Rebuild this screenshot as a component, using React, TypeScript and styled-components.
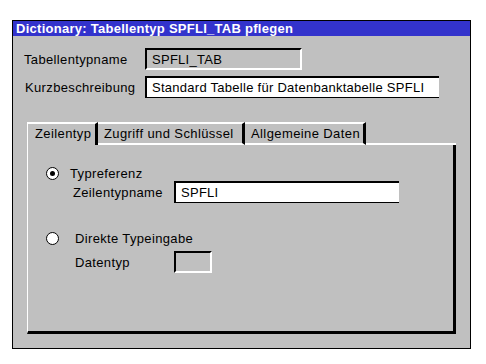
import React from 'react';
import styled, { createGlobalStyle } from 'styled-components';

const GlobalStyle = createGlobalStyle`
  html, body {
    margin: 0;
    padding: 0;
    background: #ffffff;
  }
  body {
    font-family: "Liberation Sans", Arial, sans-serif;
  }
`;

const Page = styled.div`
  padding: 20px 0 0 12px;
`;

const Window = styled.div`
  width: 459px;
  height: 329px;
  box-sizing: border-box;
  border: 1px solid #000;
  background: #c0c0c0;
  display: flex;
  flex-direction: column;
`;

const TitleBar = styled.div`
  height: 15px;
  background: #3333cc;
  color: #fff;
  font-weight: bold;
  font-size: 13px;
  letter-spacing: 0.27px;
  line-height: 15px;
  padding-left: 3px;
  white-space: nowrap;
  overflow: hidden;
`;

const Body = styled.div`
  flex: 1;
  display: flex;
  flex-direction: column;
  padding: 12px 14px 14px 11px;
`;

const FormGrid = styled.div`
  display: grid;
  grid-template-columns: 121px auto;
  row-gap: 6px;
  align-items: center;
`;

const Label = styled.span<{ $indent?: number }>`
  font-size: 13px;
  letter-spacing: 0.35px;
  color: #000;
  padding-left: ${(p) => p.$indent ?? 0}px;
  white-space: nowrap;
`;

const Field = styled.div<{ $width: number; $disabled?: boolean }>`
  width: ${(p) => p.$width}px;
  height: 22px;
  box-sizing: border-box;
  background: ${(p) => (p.$disabled ? '#c0c0c0' : '#ffffff')};
  border-top: 2px solid #000;
  border-left: 2px solid #000;
  border-bottom: ${(p) => (p.$disabled ? '2px solid #fff' : '1px solid #000')};
  border-right: ${(p) => (p.$disabled ? '2px solid #fff' : '0')};
  font-size: 13px;
  letter-spacing: 0.27px;
  line-height: 19px;
  padding-left: 5px;
  white-space: nowrap;
`;

const TabArea = styled.div`
  flex: 1;
  margin: 24px 0 0 3px;
  display: flex;
  flex-direction: column;
`;

const TabRow = styled.div`
  display: flex;
  height: 23px;
`;

const Tab = styled.div<{ $active?: boolean; $width: number }>`
  width: ${(p) => p.$width}px;
  box-sizing: border-box;
  border-top: 2px solid #fff;
  border-left: ${(p) => (p.$active ? '1px solid #fff' : '0')};
  border-right: 3px solid #000;
  border-bottom: ${(p) => (p.$active ? '0' : '2px solid #fff')};
  font-size: 13px;
  letter-spacing: 0.4px;
  line-height: 20px;
  padding-left: ${(p) => (p.$active ? 7 : 6)}px;
  white-space: nowrap;
`;

const TabRest = styled.div`
  flex: 1;
  border-bottom: 2px solid #fff;
`;

const TabPanel = styled.div`
  flex: 1;
  border-left: 1px solid #fff;
  border-right: 3px solid #000;
  border-bottom: 3px solid #000;
  padding: 20px 0 0 18px;
  display: flex;
  flex-direction: column;
`;

const OptionGroup = styled.div<{ $gap: number }>`
  display: flex;
  flex-direction: column;
  margin-bottom: ${(p) => p.$gap}px;
`;

const RadioLine = styled.div<{ $labelGap: number }>`
  display: flex;
  align-items: center;
  gap: ${(p) => p.$labelGap}px;
  height: 16px;
`;

const Radio = styled.span<{ $checked?: boolean }>`
  width: 13px;
  height: 13px;
  box-sizing: border-box;
  border-radius: 50%;
  background: #fff;
  border: 1px solid #000;
  position: relative;
  flex: none;
  &::after {
    content: '';
    display: ${(p) => (p.$checked ? 'block' : 'none')};
    position: absolute;
    left: 3px;
    top: 3px;
    width: 5px;
    height: 5px;
    border-radius: 50%;
    background: #000;
  }
`;

const SubRow = styled.div<{ $top: number; $indent: number }>`
  display: grid;
  grid-template-columns: ${(p) => 128 - p.$indent}px auto;
  align-items: center;
  margin-top: ${(p) => p.$top}px;
  padding-left: ${(p) => p.$indent}px;
`;

export default function App() {
  return (
    <Page>
      <GlobalStyle />
      <Window>
        <TitleBar>Dictionary: Tabellentyp SPFLI_TAB pflegen</TitleBar>
        <Body>
          <FormGrid>
            <Label>Tabellentypname</Label>
            <Field $width={157} $disabled>SPFLI_TAB</Field>
            <Label $indent={1}>Kurzbeschreibung</Label>
            <Field $width={294}>Standard Tabelle für Datenbanktabelle SPFLI</Field>
          </FormGrid>
          <TabArea>
            <TabRow>
              <Tab $active $width={71}>Zeilentyp</Tab>
              <Tab $width={147}>Zugriff und Schlüssel</Tab>
              <Tab $width={121}>Allgemeine Daten</Tab>
              <TabRest />
            </TabRow>
            <TabPanel>
              <OptionGroup $gap={27}>
                <RadioLine $labelGap={11}>
                  <Radio $checked />
                  <Label>Typreferenz</Label>
                </RadioLine>
                <SubRow $top={0} $indent={27}>
                  <Label>Zeilentypname</Label>
                  <Field $width={225}>SPFLI</Field>
                </SubRow>
              </OptionGroup>
              <OptionGroup $gap={0}>
                <RadioLine $labelGap={16}>
                  <Radio />
                  <Label>Direkte Typeingabe</Label>
                </RadioLine>
                <SubRow $top={5} $indent={29}>
                  <Label>Datentyp</Label>
                  <Field $width={38} $disabled />
                </SubRow>
              </OptionGroup>
            </TabPanel>
          </TabArea>
        </Body>
      </Window>
    </Page>
  );
}
